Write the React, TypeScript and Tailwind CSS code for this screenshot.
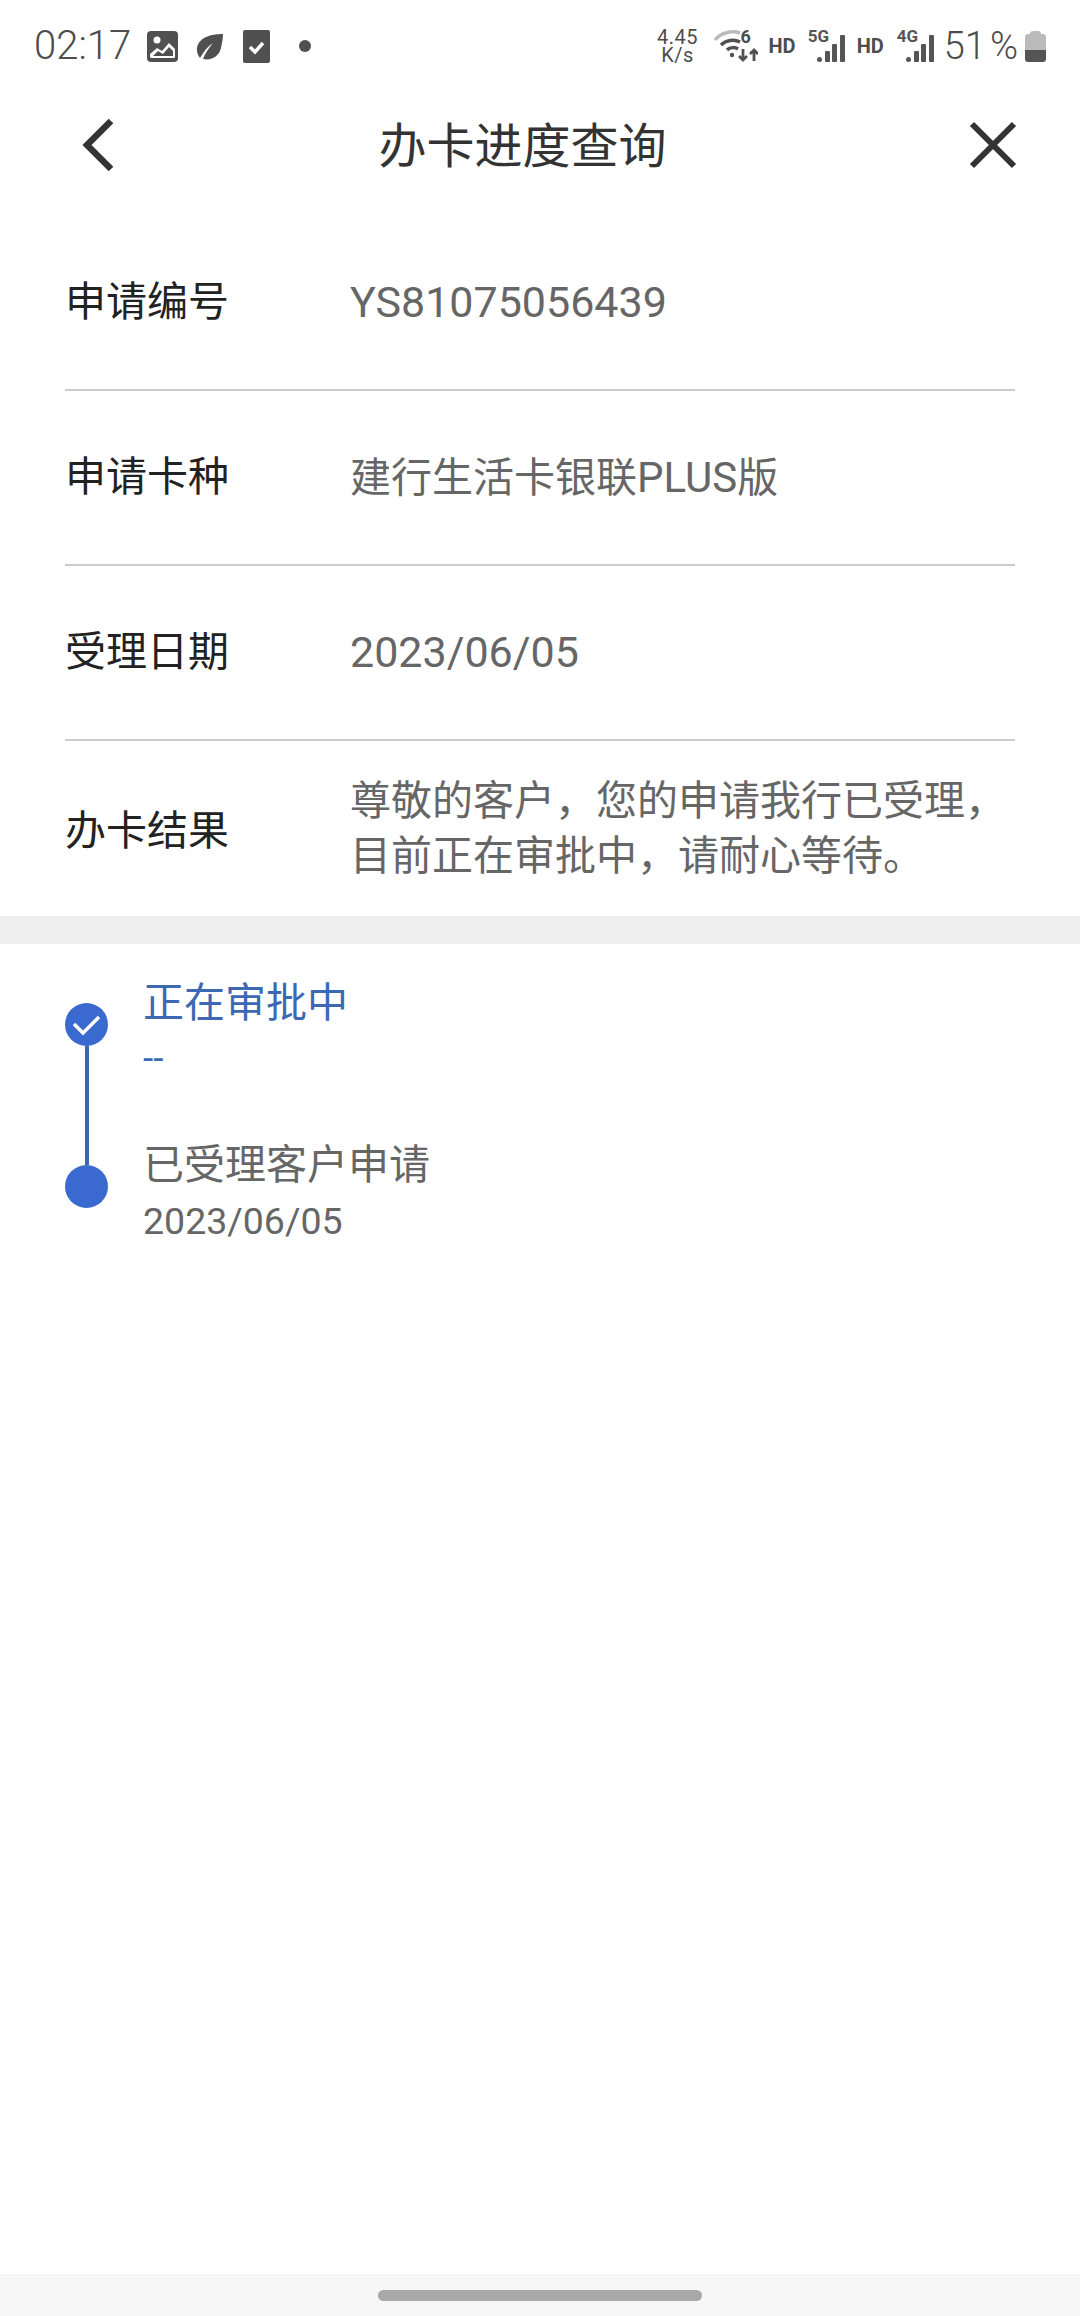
const rows = [
  { label: "申请编号", value: <span className="text-[43px]">YS81075056439</span> },
  {
    label: "申请卡种",
    value: (
      <>
        建行生活卡银联<span className="text-[42px]">PLUS</span>版
      </>
    ),
  },
  { label: "受理日期", value: <span className="text-[43px]">2023/06/05</span> },
];

function Signal({ tag }: { tag: string }) {
  return (
    <div className="relative w-[38px] h-[32px]">
      <span className="absolute left-0 -top-[2px] text-[17px] leading-[17px] font-bold text-[#555]">{tag}</span>
      <svg viewBox="0 0 30 28" className="absolute left-[9px] top-[5px] w-[30px] h-[28px]" fill="#555">
        <rect x="0" y="22" width="5" height="5" rx="2.5" />
        <rect x="8" y="16" width="5" height="11" rx="1" />
        <rect x="15" y="9" width="5" height="18" rx="1" />
        <rect x="23" y="0" width="5" height="27" rx="1" />
      </svg>
    </div>
  );
}

function StatusBar() {
  return (
    <div className="flex items-center h-[90px] pl-[34px] pr-[34px] pt-[2px] text-[#4d4d4d]">
      <span className="text-[40px] font-light leading-none mr-[16px]">02:17</span>
      <svg viewBox="0 0 31 31" className="w-[31px] h-[31px] mr-[18px]">
        <rect width="31" height="31" rx="4" fill="#505050" />
        <circle cx="10" cy="9" r="3.5" fill="#fff" />
        <path d="M3 26v-3l7-6 5 3 7-8 6 6v8q0 1-1 1H5q-2 0-2-1z" fill="#fff" />
        <path d="M6 25l5-5 5 3 6-7 4 4v5z" fill="#505050" />
      </svg>
      <svg viewBox="0 0 28 27" className="w-[28px] h-[27px] mr-[19px]">
        <path d="M27 1C15 1 3 4 1 15c-.5 4 1 8 3 10C8 18 12 13 17 10 13 15 9 20 7 26c9 2 16-3 18-11 1-5 2-10 2-14z" fill="#505050" />
      </svg>
      <svg viewBox="0 0 27 33" className="w-[27px] h-[33px] mr-[29px]">
        <rect width="27" height="33" rx="2" fill="#505050" />
        <path d="M7 17l5 5 8-9" fill="none" stroke="#fff" strokeWidth="3.5" />
      </svg>
      <span className="w-[12px] h-[12px] rounded-full bg-[#505050]" />

      <div className="flex-1" />

      <div className="flex flex-col items-center w-[42px] mr-[15px] text-[20px] leading-[18px] tracking-[0.5px]">
        <span>4.45</span>
        <span>K/s</span>
      </div>
      <div className="relative w-[44px] h-[32px] mr-[11px]">
        <svg viewBox="0 0 44 32" className="w-[44px] h-[32px]">
          <path d="M1 10C6 3 18 0 26 3" fill="none" stroke="#bbb" strokeWidth="3.5" />
          <path d="M7 15c5-5 13-6 19-3" fill="none" stroke="#505050" strokeWidth="3.5" />
          <path d="M13 20c3-3 8-3 11-1" fill="none" stroke="#505050" strokeWidth="3.5" />
          <circle cx="18" cy="25" r="2.2" fill="#505050" />
          <path d="M29 19v11M25 26l4 4 4-4M40 31V20M36 24l4-4 4 4" fill="none" stroke="#505050" strokeWidth="2.8" />
        </svg>
        <span className="absolute left-[27px] -top-[2px] text-[18px] leading-[18px] font-bold">6</span>
      </div>
      <span className="text-[20px] font-bold leading-none mr-[12px]">HD</span>
      <Signal tag="5G" />
      <span className="text-[20px] font-bold leading-none ml-[11px] mr-[13px]">HD</span>
      <Signal tag="4G" />
      <span className="text-[38px] font-light leading-none ml-[9px] mr-[7px] flex items-center gap-[4px]">
        <span>51</span>
        <span className="text-[38px]">%</span>
      </span>
      <div className="flex flex-col items-center w-[21px]">
        <div className="w-[11px] h-[3px] bg-[#bbb] rounded-t-sm" />
        <div className="w-[21px] h-[16px] bg-[#bbb] rounded-t-[3px]" />
        <div className="w-[21px] h-[12px] bg-[#555] rounded-b-[3px]" />
      </div>
    </div>
  );
}

export default function App() {
  return (
    <div
      className="w-[1080px] h-[2316px] flex flex-col bg-white overflow-hidden"
      style={{ fontFamily: 'Roboto, "Noto Sans CJK SC", sans-serif' }}
    >
      <StatusBar />

      {/* nav */}
      <div className="flex items-center justify-between h-[110px] pl-[80px] pr-[63px] pb-[1px]">
        <svg viewBox="0 0 36 54" className="w-[36px] h-[54px]">
          <path d="M31 3L7 27l24 24" fill="none" stroke="#333" strokeWidth="6.5" />
        </svg>
        <span className="text-[48px] leading-none text-[#333] -ml-[40px] mt-[5px]">办卡进度查询</span>
        <svg viewBox="0 0 48 48" className="w-[48px] h-[48px]">
          <path d="M3 3l42 42M45 3L3 45" fill="none" stroke="#333" strokeWidth="6" />
        </svg>
      </div>

      {/* details */}
      <div className="pt-[16px] px-[65px]">
        {rows.map((r) => (
          <div key={r.label} className="flex items-center h-[175px] border-b-2 border-[#ccc]">
            <span className="w-[285px] text-[41px] text-[#222]">{r.label}</span>
            <span className="text-[41px] text-[#666]">{r.value}</span>
          </div>
        ))}
        <div className="flex items-center h-[175px]">
          <span className="w-[285px] text-[41px] text-[#222] pt-[6px]">办卡结果</span>
          <span className="text-[41px] leading-[55px] text-[#666]">
            尊敬的客户，您的申请我行已受理，
            <br />
            目前正在审批中，请耐心等待。
          </span>
        </div>
      </div>

      <div className="h-[28px] bg-[#eeeeee]" />

      {/* progress */}
      <div className="flex pl-[65px] pt-[59px]">
        <div className="flex flex-col items-center w-[43px] mr-[35px]">
          <div className="w-[43px] h-[43px] rounded-full bg-[#3a6ad0] flex items-center justify-center">
            <svg viewBox="0 0 30 22" className="w-[30px] h-[22px]">
              <path d="M2 10l9 9L27 3" fill="none" stroke="#fff" strokeWidth="3.5" />
            </svg>
          </div>
          <div className="w-[4px] h-[119px] bg-[#3a66b4]" />
          <div className="w-[43px] h-[43px] rounded-full bg-[#3a6ad0]" />
        </div>
        <div className="flex flex-col -mt-[28px]">
          <span className="text-[41px] leading-[56px] text-[#3c68b4]">正在审批中</span>
          <span className="text-[37px] leading-[56px] text-[#3c68b4]">--</span>
          <span className="text-[41px] leading-[56px] text-[#666] mt-[50px]">已受理客户申请</span>
          <span className="text-[37.5px] leading-[56px] text-[#666]">2023/06/05</span>
        </div>
      </div>

      <div className="flex-1" />

      {/* gesture bar */}
      <div className="h-[42px] bg-[#f6f6f6] flex justify-center pt-[16px]">
        <div className="w-[324px] h-[11px] rounded-full bg-[#a8a8a8]" />
      </div>
    </div>
  );
}
